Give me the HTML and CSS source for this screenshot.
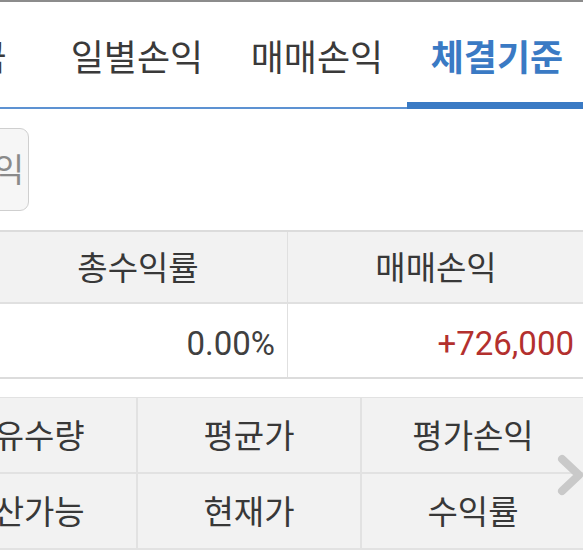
FILE: index.html
```html
<!DOCTYPE html>
<html lang="ko">
<head>
<meta charset="utf-8">
<link rel="stylesheet" href="styles.css">
</head>
<body>
<div class="page">
  <div class="topline"></div>
  <nav class="tabs">
    <div class="tab">예수금</div>
    <div class="tab">일별손익</div>
    <div class="tab">매매손익</div>
    <div class="tab active">체결기준</div>
  </nav>
  <div class="toolbar">
    <button class="btn">손익</button>
  </div>
  <div class="summary">
    <div class="cell head">총수익률</div>
    <div class="cell head">매매손익</div>
    <div class="cell num">0.00%</div>
    <div class="cell num up">+726,000</div>
  </div>
  <div class="list-wrap">
    <div class="list">
      <div class="cell">보유수량</div>
      <div class="cell">평균가</div>
      <div class="cell">평가손익</div>
      <div class="cell">청산가능</div>
      <div class="cell">현재가</div>
      <div class="cell">수익률</div>
    </div>
    <svg class="chev" width="28" height="42" viewBox="0 0 28 42"><polyline points="5,5 22,21 5,37" fill="none" stroke="#c9c9c9" stroke-width="8" stroke-linecap="round" stroke-linejoin="round"/></svg>
  </div>
</div>
</body>
</html>
```

FILE: styles.css
```css
html, body {
  margin: 0;
  padding: 0;
  background: #ffffff;
}
body {
  width: 583px;
  height: 550px;
  overflow: hidden;
  font-family: Roboto, "Noto Sans CJK KR", sans-serif;
  color: #383838;
}
.page {
  width: 583px;
  overflow: hidden;
}
.topline {
  height: 2px;
  background: #8c8c8c;
}
.tabs {
  display: flex;
  margin-left: -133px;
  border-bottom: 2px solid #5d92d2;
}
.tab {
  flex: 0 0 180px;
  box-sizing: border-box;
  height: 107px;
  margin-bottom: -2px;
  padding-top: 5px;
  border-bottom: 7px solid transparent;
  display: flex;
  align-items: center;
  justify-content: center;
  font-size: 36px;
  color: #3a3a3a;
  white-space: nowrap;
}
.tab.active {
  border-bottom-color: #3a7ac4;
  color: #3a7ac4;
  font-weight: 700;
}
.toolbar {
  padding: 19px 0 19px;
}
.btn {
  display: block;
  box-sizing: border-box;
  margin-left: -64px;
  width: 93px;
  height: 83px;
  border: 1px solid #cfcfcf;
  border-radius: 9px;
  background: #f6f6f6;
  font-family: "Noto Sans CJK KR", sans-serif;
  font-size: 33px;
  color: #8a8a8a;
  text-align: right;
  padding: 0 4px 4px 0;
}
.summary {
  display: grid;
  grid-template-columns: 298px 297px;
  margin-left: -11px;
  border-top: 2px solid #dcdcdc;
  border-bottom: 2px solid #dcdcdc;
}
.summary .cell {
  display: flex;
  align-items: center;
  border-left: 1px solid #e0e0e0;
}
.summary .cell:nth-child(odd) {
  border-left: none;
}
.summary .head {
  height: 72px;
  justify-content: center;
  background: #f2f2f2;
  border-bottom: 2px solid #e0e0e0;
  font-size: 33px;
  padding-bottom: 2px;
  box-sizing: border-box;
}
.summary .num {
  height: 73px;
  justify-content: flex-end;
  font-size: 33px;
  padding: 6px 12px 0 0;
  box-sizing: border-box;
  color: #404040;
}
.summary .num.up {
  color: #b3302e;
  padding-right: 10px;
}
.list-wrap {
  position: relative;
  margin-top: 18px;
}
.list {
  display: grid;
  grid-template-columns: 224px 224px 224px;
  margin-left: -88px;
  background: #f2f2f2;
  border-top: 1px solid #e2e2e2;
}
.list .cell {
  height: 76px;
  box-sizing: border-box;
  display: flex;
  align-items: center;
  justify-content: center;
  font-size: 33px;
  color: #383838;
  border-left: 2px solid #e2e2e2;
  border-bottom: 2px solid #e2e2e2;
  padding-bottom: 2px;
}
.list .cell:nth-child(3n+1) {
  border-left: none;
}
.chev {
  position: absolute;
  right: -2px;
  top: 57px;
}
```
